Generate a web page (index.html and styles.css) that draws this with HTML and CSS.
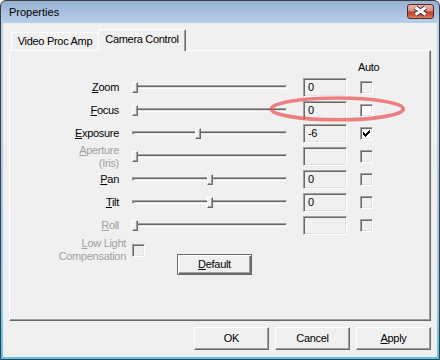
FILE: index.html
```html
<!DOCTYPE html>
<html>
<head>
<meta charset="utf-8">
<title>Properties</title>
<link rel="stylesheet" href="styles.css">
</head>
<body>
<div class="window">
  <div class="titlebar">
    <span class="title">Properties</span>
    <span class="close">
      <svg width="25" height="13" viewBox="0 0 25 13">
        <path d="M7.5 2.5 L17.5 9.5 M17.5 2.5 L7.5 9.5" stroke="#3a2a2a" stroke-width="5" fill="none"/>
        <path d="M7.5 2.5 L17.5 9.5 M17.5 2.5 L7.5 9.5" stroke="#ffffff" stroke-width="3" fill="none"/>
      </svg>
    </span>
  </div>
  <div class="client">
    <div class="tabs">
      <div class="tab">Video Proc Amp</div>
      <div class="tab active">Camera Control</div>
    </div>
    <div class="panel">
      <div class="auto-head">Auto</div>
      <div class="rows">
        <div class="row">
          <div class="label"><u>Z</u>oom</div>
          <div class="slider"><div class="track"></div><div class="thumb" style="left:0px"></div></div>
          <div class="edit">0</div>
          <div class="check"></div>
        </div>
        <div class="row">
          <div class="label"><u>F</u>ocus</div>
          <div class="slider"><div class="track"></div><div class="thumb" style="left:0px"></div></div>
          <div class="edit">0</div>
          <div class="check enabled"></div>
        </div>
        <div class="row">
          <div class="label"><u>E</u>xposure</div>
          <div class="slider"><div class="track"></div><div class="thumb" style="left:63px"></div></div>
          <div class="edit">-6</div>
          <div class="check enabled">
            <svg class="tick" width="7" height="7" viewBox="0 0 7 7" shape-rendering="crispEdges"><path d="M6 0h1v1h-1z M5 1h2v1h-2z M0 2h1v1h-1z M4 2h3v1h-3z M0 3h2v1h-2z M3 3h3v1h-3z M0 4h5v1h-5z M1 5h3v1h-3z M2 6h1v1h-1z" fill="#000"/></svg>
          </div>
        </div>
        <div class="row">
          <div class="label disabled"><u>A</u>perture<br>(Iris)</div>
          <div class="slider"><div class="track"></div><div class="thumb" style="left:0px"></div></div>
          <div class="edit"></div>
          <div class="check"></div>
        </div>
        <div class="row">
          <div class="label"><u>P</u>an</div>
          <div class="slider"><div class="track"></div><div class="thumb" style="left:75px"></div></div>
          <div class="edit">0</div>
          <div class="check"></div>
        </div>
        <div class="row">
          <div class="label"><u>T</u>ilt</div>
          <div class="slider"><div class="track"></div><div class="thumb" style="left:75px"></div></div>
          <div class="edit">0</div>
          <div class="check"></div>
        </div>
        <div class="row">
          <div class="label disabled"><u>R</u>oll</div>
          <div class="slider"><div class="track"></div><div class="thumb" style="left:0px"></div></div>
          <div class="edit"></div>
          <div class="check"></div>
        </div>
      </div>
      <div class="lowlight">
        <div class="ll-label disabled"><u>L</u>ow Light<br>Compensation</div>
        <div class="check ll-check"></div>
        <button class="btn default-btn"><u>D</u>efault</button>
      </div>
    </div>
    <div class="buttons">
      <button class="btn">OK</button>
      <button class="btn">Cancel</button>
      <button class="btn"><u>A</u>pply</button>
    </div>
  </div>
  <svg class="annot" width="440" height="360" viewBox="1 1 440 360">
    <ellipse cx="337.3" cy="108.9" rx="66" ry="10.9" fill="none" stroke="rgba(238,82,82,0.72)" stroke-width="3.6"/>
  </svg>
</div>
</body>
</html>
```

FILE: styles.css
```css
* { box-sizing: border-box; }

html, body {
  margin: 0;
  padding: 0;
  background: #ffffff;
}

body {
  font-family: "Liberation Sans", Arial, sans-serif;
  font-size: 11px;
  letter-spacing: -0.3px;
  color: #000;
}

.window {
  position: relative;
  width: 440px;
  height: 360px;
  border: 1px solid #3a3d42;
  border-radius: 6px 6px 0 0;
  background: linear-gradient(to bottom, #98b1d3 0px, #b8cfe9 22px, #b3cde9 150px, #8fc9ee 300px, #55c6ee 100%);
  padding: 0 2px 2px 2px;
  display: flex;
  flex-direction: column;
}

.titlebar {
  height: 22px;
  display: flex;
  align-items: center;
  justify-content: space-between;
  padding-left: 6px;
  padding-right: 3px;
}

.title {
  letter-spacing: 0;
  color: #000;
}

.close {
  width: 27px;
  height: 15px;
  border: 1px solid #5a2424;
  border-radius: 3px;
  background: linear-gradient(to bottom, #e9b7ac 0%, #d9907f 45%, #c3462f 52%, #c85438 78%, #dd8a63 100%);
  display: flex;
  align-items: center;
  justify-content: center;
  margin-bottom: 2px;
}

.close svg { display: block; }

.client {
  flex: 1;
  background: #f0f0f0;
  padding: 6px 0 7px 0;
  display: flex;
  flex-direction: column;
}

.tabs {
  height: 21px;
  display: flex;
  align-items: flex-end;
  padding-left: 8px;
}

.tab {
  width: 87px;
  height: 18px;
  border-top: 1px solid #fff;
  border-left: 1px solid #fff;
  border-radius: 2px 0 0 0;
  text-align: center;
  line-height: 16px;
  background: #f0f0f0;
}

.tab.active {
  position: relative;
  z-index: 1;
  width: 88px;
  height: 22px;
  margin-bottom: -1px;
  border-right: 1px solid #696969;
  border-radius: 2px 2px 0 0;
  box-shadow: inset -1px 0 0 #a0a0a0;
  line-height: 19px;
  padding-bottom: 2px;
}

.panel {
  height: 271px;
  margin: 0 6px;
  border: 1px solid;
  border-color: #fff #696969 #696969 #fff;
  box-shadow: inset -1px -1px 0 #a0a0a0;
  background: #f0f0f0;
  padding-top: 10px;
}

.auto-head {
  line-height: 13px;
  padding-left: 348px;
  margin-bottom: 4px;
}

.rows {
  display: flex;
  flex-direction: column;
  gap: 4px;
}

.row {
  height: 19px;
  display: flex;
  align-items: center;
}

.label {
  width: 109px;
  text-align: right;
  line-height: 13px;
  flex: none;
}

.disabled { color: #a0a0a0; }

.slider {
  position: relative;
  width: 155px;
  height: 19px;
  margin-left: 13px;
  flex: none;
}

.track {
  margin-top: 7px;
  height: 4px;
  border-top: 1px solid #a0a0a0;
  border-left: 1px solid #a0a0a0;
  border-bottom: 1px solid #fff;
  border-right: 1px solid #fff;
  box-shadow: inset 1px 1px 0 #696969, inset -1px -1px 0 #e3e3e3;
}

.thumb {
  position: absolute;
  top: 4px;
  width: 6px;
  height: 11px;
  border: 1px solid;
  border-color: #fff #696969 #696969 #fff;
  box-shadow: inset -1px -1px 0 #a0a0a0;
  background: #f0f0f0;
}

.edit {
  width: 44px;
  height: 19px;
  margin-left: 16px;
  flex: none;
  border: 1px solid;
  border-color: #a0a0a0 #fff #fff #a0a0a0;
  box-shadow: inset 1px 1px 0 #696969, inset -1px -1px 0 #e3e3e3;
  background: #f0f0f0;
  padding-left: 4px;
  line-height: 17px;
}

.check {
  width: 13px;
  height: 13px;
  margin-left: 13px;
  flex: none;
  border: 1px solid;
  border-color: #a0a0a0 #fff #fff #a0a0a0;
  box-shadow: inset 1px 1px 0 #696969, inset -1px -1px 0 #e3e3e3;
  background: #f0f0f0;
  padding: 2px;
}

.check.enabled { background: #fff; }

.tick { display: block; }

.lowlight {
  display: flex;
  align-items: flex-start;
  margin-top: 2px;
}

.ll-label {
  width: 116px;
  text-align: right;
  line-height: 13px;
  flex: none;
}

.ll-check {
  margin-left: 6px;
  margin-top: 7px;
}

.btn {
  font-family: inherit;
  font-size: 11px;
  letter-spacing: -0.3px;
  color: #000;
  width: 75px;
  height: 23px;
  padding: 0;
  margin: 0;
  background: #f0f0f0;
  border: 1px solid;
  border-color: #fff #696969 #696969 #fff;
  box-shadow: inset -1px -1px 0 #a0a0a0;
  text-align: center;
  line-height: 21px;
  border-radius: 0;
  flex: none;
}

.default-btn {
  height: 21px;
  margin-left: 32px;
  margin-top: 17px;
  line-height: 19px;
  border-color: #696969;
  box-shadow: inset 1px 1px 0 #fff, inset -1px -1px 0 #696969, inset -2px -2px 0 #a0a0a0;
}

.buttons {
  margin-top: 6px;
  height: 23px;
  display: flex;
  justify-content: flex-end;
  gap: 6px;
  padding-right: 6px;
}

.annot {
  position: absolute;
  left: 0;
  top: 0;
  pointer-events: none;
}
```
